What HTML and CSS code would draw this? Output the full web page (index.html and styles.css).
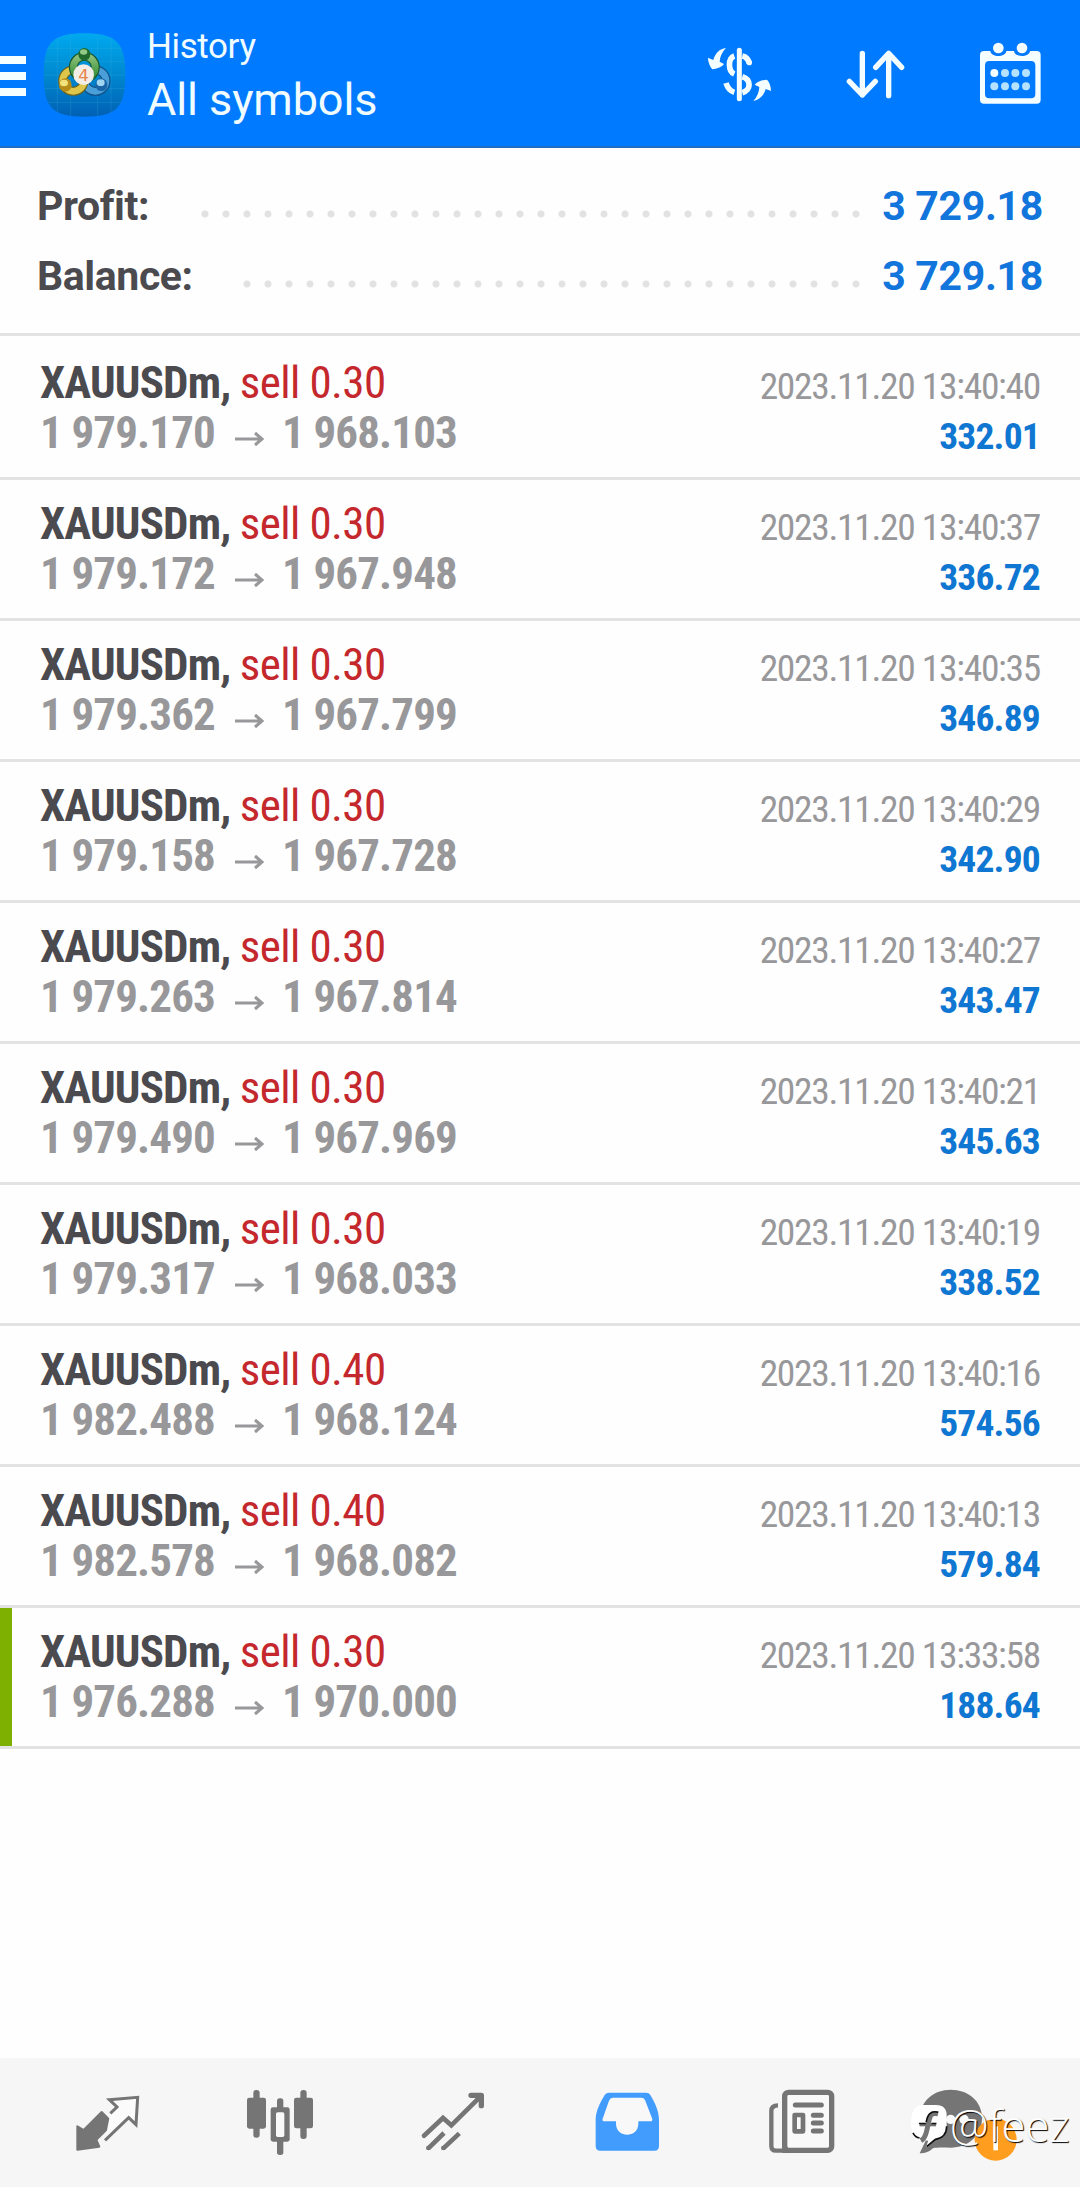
FILE: index.html
```html
<!DOCTYPE html>
<html lang="en">
<head>
  <meta charset="UTF-8" />
  <meta name="viewport" content="width=device-width, initial-scale=1.0" />
  <title>History</title>
  <link rel="stylesheet" href="styles.css">
</head>
<body>
  <header>
    <div class="menu"><span></span><span></span><span></span></div>
    <svg class="app-icon" viewBox="129 97 249 252">
      <defs>
        <linearGradient id="bg" x1="0" y1="0" x2="0" y2="1">
          <stop offset="0" stop-color="#00a9ee" />
          <stop offset="0.5" stop-color="#0088cf" />
          <stop offset="1" stop-color="#0060b4" />
        </linearGradient>
        <linearGradient id="green" x1="0" y1="0" x2="0" y2="1">
          <stop offset="0" stop-color="#8cc07a" />
          <stop offset="1" stop-color="#2d8a32" />
        </linearGradient>
      </defs>
      <path fill="url(#bg)" d="M253 98C350 98 376 126 376 223S350 348 253 348 131 320 131 223 156 98 253 98Z" />
      <path stroke="#4db8e6" stroke-opacity=".3" stroke-width="2" d="M172 110V336M212 100V346M293 100V346M333 110V336M142 143H364M132 183H375M131 223H376M132 264H375M142 305H364" />
      <g fill="none">
        <circle cx="286" cy="240" r="32" stroke="#124e87" stroke-width="27" />
        <circle cx="286" cy="240" r="32" stroke="#4b9fd9" stroke-width="20" />
        <circle cx="220" cy="240" r="32" stroke="#6a6420" stroke-width="27" />
        <circle cx="220" cy="240" r="32" stroke="#dfc64a" stroke-width="20" />
        <circle cx="253" cy="200" r="33" stroke="#17562c" stroke-width="27" />
        <circle cx="253" cy="200" r="33" stroke="url(#green)" stroke-width="20" />
      </g>
      <ellipse cx="253" cy="161" rx="18" ry="19" fill="#1f6a2c" />
      <ellipse cx="251" cy="154" rx="11" ry="8" fill="#92ca85" />
      <ellipse cx="196" cy="253" rx="19" ry="20" fill="#b58c18" />
      <ellipse cx="192" cy="247" rx="12" ry="10" fill="#f2e27b" />
      <ellipse cx="304" cy="252" rx="18" ry="19" fill="#1864a6" />
      <ellipse cx="302" cy="246" rx="12" ry="10" fill="#a0d5f2" />
      <circle cx="251" cy="222" r="31" fill="#f2ede7" />
      <text class="logo-num" x="251" y="240" text-anchor="middle">4</text>
    </svg>
    <div class="titles">
      <div class="small-title">History</div>
      <div class="big-title">All symbols</div>
    </div>
    <div class="actions">
      <svg viewBox="81 129 198 198">
        <g fill="none" stroke="#f4fdff">
          <path stroke-width="15" stroke-linecap="round" d="M178 151V296" />
          <path stroke-width="17" d="M163 168C143 175 144 214 163 222M138 249C143 265 150 273 163 277M187 168C198 170 205 178 208 190M187 230C214 238 214 271 187 278" />
          <path stroke-width="16" stroke-linecap="round" d="M208 187V188" />
        </g>
        <path fill="#f4fdff" d="M138 144C119 146 105 160 100 180L84 173C84 187 90 200 97 208C110 206 124 203 132 192L119 185C120 169 127 155 138 144ZM220 303C239 299 252 286 257 267L273 273C273 259 268 246 261 239C248 240 234 243 224 254L238 261C237 278 231 291 220 303Z" />
      </svg>
      <svg viewBox="486 129 198 198">
        <path fill="none" stroke="#f4fdff" stroke-width="16" stroke-linecap="round" stroke-linejoin="round" d="M547 160V285M508 244L547 285L586 244M626 287V160M587 202L626 160L665 202" />
      </svg>
      <svg viewBox="891 129 198 198">
        <path fill="#f4fdff" fill-rule="evenodd" d="M912 153H931C933 173 977 173 979 153H1002C1004 173 1048 173 1050 153H1070Q1082 153 1082 165V299Q1082 311 1070 311H912Q900 311 900 299V165Q900 153 912 153ZM928 183Q915 183 915 196V282Q915 295 928 295H1053Q1066 295 1066 282V196Q1066 183 1053 183Z" />
        <g fill="#f4fdff">
          <circle cx="955" cy="144" r="16" /><circle cx="1026" cy="144" r="16" />
          <circle cx="943" cy="219" r="12" />
        </g>
        <g fill="#b5e2ff">
          <circle cx="975" cy="219" r="12" /><circle cx="1006" cy="219" r="12" /><circle cx="1038" cy="219" r="12" />
          <circle cx="943" cy="259" r="12" /><circle cx="975" cy="259" r="12" /><circle cx="1006" cy="259" r="12" /><circle cx="1038" cy="259" r="12" />
        </g>
      </svg>
    </div>
  </header>

  <main>
    <section class="summary">
      <div class="sum-row"><span class="sum-label">Profit:</span><span class="dots dots-profit"></span><span class="sum-value">3 729.18</span></div>
      <div class="sum-row"><span class="sum-label">Balance:</span><span class="dots dots-balance"></span><span class="sum-value">3 729.18</span></div>
    </section>
    <section id="deals"></section>
  </main>

  <footer>
    <svg viewBox="176 103 288 288">
      <path fill="#757575" stroke="#757575" stroke-width="6" stroke-linejoin="round" d="M304 214L338 248L288 297L297 318L231 327V257L250 268Z" />
      <path fill="#fbfbfb" stroke="#757575" stroke-width="9" d="M330 218L350 199L327 177L412 170L407 252L385 231L314 299" />
    </svg>
    <svg viewBox="696 103 288 288">
      <g fill="#757575">
        <rect x="760" y="148" width="19" height="143" rx="9" /><rect x="741" y="171" width="57" height="93" rx="7" />
        <rect x="901" y="148" width="19" height="147" rx="9" /><rect x="882" y="171" width="57" height="92" rx="7" />
        <rect x="831" y="173" width="19" height="170" rx="8" /><rect x="812" y="200" width="57" height="103" rx="7" />
      </g>
      <rect x="828" y="215" width="25" height="74" rx="5" fill="#f9f9f9" />
    </svg>
    <svg viewBox="136 103 288 288">
      <g fill="none" stroke="#757575" stroke-width="14">
        <path stroke-linecap="round" d="M193 285L250 232L275 254L362 168" />
        <path stroke-width="16" stroke-linecap="round" stroke-linejoin="round" d="M334 164H365V195" />
        <path d="M206 323L253 277M251 323L299 278" />
      </g>
      <path fill="#757575" d="M340 165H370V195Z" />
      <circle cx="206" cy="322" r="7" fill="#757575" /><circle cx="251" cy="322" r="7" fill="#757575" />
    </svg>
    <svg viewBox="656 103 288 288">
      <path fill="#419cfd" d="M746 156H858Q866 156 870 163C884 186 896 212 896 238V316Q896 330 882 330H720Q706 330 706 316V238C706 212 719 186 733 163Q738 156 746 156Z" />
      <path fill="#f8f8f8" d="M757 171H844Q850 171 854 178L876 235Q877 242 870 242H834V249C834 293 767 293 767 249V242H734Q724 242 727 234L746 180Q750 171 757 171Z" />
    </svg>
    <svg viewBox="96 103 288 288">
      <rect x="194" y="155" width="141" height="174" rx="12" fill="#f9f9f9" stroke="#757575" stroke-width="16" />
      <path fill="none" stroke="#757575" stroke-width="13" d="M174 194Q154 194 154 211V316Q154 330 168 330H204" />
      <path fill="#757575" d="M187 300V337H204V322Z" />
      <g fill="none" stroke="#757575" stroke-width="15" stroke-linecap="round">
        <path d="M226 193H304M280 224H304M280 247H304M280 271H304" />
        <rect x="224" y="223" width="25" height="49" stroke-width="14" stroke-linejoin="round" />
      </g>
    </svg>
    <svg viewBox="616 103 288 288">
      <path fill="#757575" d="M693 147C745 147 787 180 787 233S745 321 693 321C672 321 651 320 640 323C628 335 614 338 600 338L618 300C604 284 599 258 600 232C603 180 642 147 693 147Z" />
      <circle cx="693" cy="236" r="14" fill="#fafafa" /><circle cx="733" cy="236" r="14" fill="#fafafa" />
      <circle cx="828" cy="297" r="63" fill="#ff9d1f" />
      <path stroke="#fff" stroke-width="14" d="M828 257V329" />
    </svg>
    <div class="watermark">
      <svg viewBox="574 203 112 134">
        <path fill="#fff" d="M608 208H650Q682 208 682 240V278Q682 308 650 311L620 334L626 316C589 316 574 300 574 265Q574 208 608 208Z" />
        <path fill="none" stroke="#111" stroke-width="5" d="M682 272Q682 306 648 312L622 333M580 292Q587 306 600 308" />
        <path fill="none" stroke="#757575" stroke-width="15" d="M656 235C634 230 632 240 627 262C621 290 618 308 604 316" />
        <path stroke="#757575" stroke-width="9" d="M600 268H650" />
        <path fill="none" stroke="#111" stroke-width="5" d="M656 230C634 224 624 236 620 260M598 264H619M636 264H651" />
      </svg>
      <span>@feez</span>
    </div>
  </footer>

  <script>
    const deals = [
      ['0.30', '1 979.170', '1 968.103', '13:40:40', '332.01'],
      ['0.30', '1 979.172', '1 967.948', '13:40:37', '336.72'],
      ['0.30', '1 979.362', '1 967.799', '13:40:35', '346.89'],
      ['0.30', '1 979.158', '1 967.728', '13:40:29', '342.90'],
      ['0.30', '1 979.263', '1 967.814', '13:40:27', '343.47'],
      ['0.30', '1 979.490', '1 967.969', '13:40:21', '345.63'],
      ['0.30', '1 979.317', '1 968.033', '13:40:19', '338.52'],
      ['0.40', '1 982.488', '1 968.124', '13:40:16', '574.56'],
      ['0.40', '1 982.578', '1 968.082', '13:40:13', '579.84'],
      ['0.30', '1 976.288', '1 970.000', '13:33:58', '188.64', 'tp']
    ];

    const arrow = '<svg class="arrow" viewBox="0 0 30 16"><path d="M0 8H27M20 2L27 8L20 14" /></svg>';
    const container = document.getElementById('deals');

    deals.forEach(([volume, open, close, time, profit, mark]) => {
      container.innerHTML += `
        <div class="deal ${mark || ''}">
          <div class="left">
            <div class="symbol"><b>XAUUSDm,</b> <span class="sell">sell ${volume}</span></div>
            <div class="price"><span>${open}</span>${arrow}<span>${close}</span></div>
          </div>
          <div class="right">
            <div class="date">2023.11.20 ${time}</div>
            <div class="profit">${profit}</div>
          </div>
        </div>
      `;
    });
  </script>
</body>
</html>
```
FILE: styles.css
```css
* {
  box-sizing: border-box;
}
body {
  margin: 0;
  height: 2187px;
  display: flex;
  flex-direction: column;
  font-family: Roboto, sans-serif;
  background-color: #fefefe;
  color: #4b4a4f;
  overflow: hidden;
}
svg {
  display: block;
  overflow: visible;
}
header {
  height: 148px;
  flex: none;
  display: flex;
  align-items: center;
  padding: 4px 37px 0 0;
  background-color: #007aff;
  border-bottom: 2px solid #1c6fc4;
  color: #f1fcff;
}
.menu {
  width: 26px;
  display: flex;
  flex-direction: column;
  gap: 8px;
  margin: 2px 17px 0 0;
}
.menu span {
  height: 8px;
  background-color: #f4fdff;
}
.app-icon {
  width: 83px;
  height: 84px;
}
.logo-num {
  font: 50px "DejaVu Sans", sans-serif;
  fill: #e8854d;
}
.titles {
  margin: 3px 0 0 21px;
  white-space: nowrap;
}
.small-title {
  font-size: 35px;
  line-height: 46px;
  letter-spacing: -0.4px;
}
.big-title {
  font-size: 45px;
  line-height: 60px;
  letter-spacing: -0.1px;
}
.actions {
  margin: 1px 0 0 auto;
  display: flex;
  gap: 69px;
}
.actions svg {
  width: 66px;
  height: 66px;
}
main {
  flex: 1;
}
.summary {
  height: 188px;
  padding: 23px 37px 0 37px;
  border-bottom: 3px solid #e3e3e3;
}
.sum-row {
  height: 70px;
  display: flex;
  align-items: center;
  font-size: 41px;
  font-weight: 700;
  white-space: nowrap;
}
.sum-label {
  letter-spacing: -0.4px;
}
.sum-value {
  width: 160px;
  margin-left: 10px;
  display: flex;
  justify-content: flex-end;
  letter-spacing: -0.3px;
  color: #1275dc;
}
.dots {
  height: 8px;
  margin: 16px 0 0 auto;
  background: radial-gradient(circle at 4px 4px, #e2e2e2 3px, transparent 4px) left top / 21px 8px;
}
.dots-profit {
  width: 672px;
}
.dots-balance {
  width: 630px;
}
.deal {
  height: 141px;
  display: flex;
  justify-content: space-between;
  padding: 19px 40px 0 40px;
  border-bottom: 3px solid #e3e3e3;
  font-stretch: 75%;
  white-space: nowrap;
}
.deal:first-child {
  height: 144px;
  padding-top: 22px;
}
.deal.tp {
  box-shadow: inset 12px 0 #7eb002;
}
.symbol,
.price {
  font-size: 45px;
  line-height: 50px;
  letter-spacing: -0.85px;
}
.sell {
  color: #c4282d;
  letter-spacing: -0.6px;
}
.price {
  display: flex;
  font-weight: 700;
  color: #98989b;
}
.arrow {
  width: 30px;
  height: 16px;
  margin: 23px 17px 0 20px;
  fill: none;
  stroke: #98989b;
  stroke-width: 3;
}
.right {
  text-align: right;
  font-size: 37.5px;
  line-height: 50px;
  padding-top: 3px;
}
.date {
  color: #98989b;
  letter-spacing: -1.3px;
}
.profit {
  font-weight: 700;
  color: #0f77d2;
  letter-spacing: -0.8px;
}
footer {
  height: 129px;
  flex: none;
  display: flex;
  align-items: center;
  justify-content: space-around;
  padding: 0 20px;
  background-color: #f6f6f6;
  position: relative;
}
footer > svg {
  width: 96px;
  height: 96px;
}
.watermark {
  position: absolute;
  left: 911px;
  top: 38px;
  display: flex;
  align-items: center;
  font: 300 43.5px "Open Sans", sans-serif;
  color: #fff;
  text-shadow: 1px 1px 1px #000;
}
.watermark svg {
  width: 37px;
  height: 45px;
}
.watermark span {
  margin-left: 2px;
}
```
